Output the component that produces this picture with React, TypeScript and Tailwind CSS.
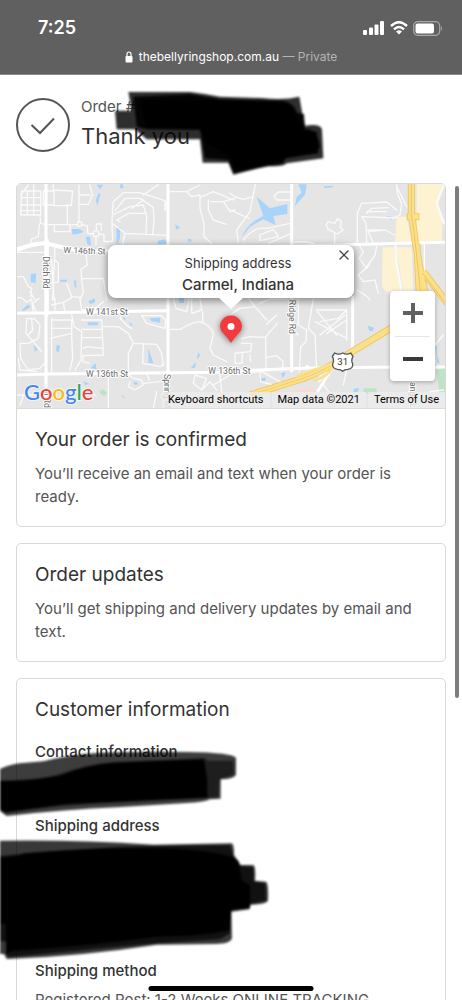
import type { ReactNode } from "react"
import { X } from "lucide-react"

const GOOGLE_LETTERS = [
  { char: "G", color: "#4285F4" },
  { char: "o", color: "#EA4335" },
  { char: "o", color: "#FBBC05" },
  { char: "g", color: "#4285F4" },
  { char: "l", color: "#34A853" },
  { char: "e", color: "#EA4335" },
]

function StatusBar() {
  return (
    <header className="h-[75px] shrink-0 bg-[#606060] border-b border-[#8a8a8a] text-white">
      <div className="flex items-center justify-between pl-[38px] pr-[19px] pt-4">
        <span className="text-lg leading-6 font-semibold">7:25</span>
        <div className="flex items-center gap-[5px]">
          <svg width="22" height="14" viewBox="0 0 22 14" fill="#fff">
            <rect x="0" y="9" width="4" height="5" rx="1" />
            <rect x="6" y="6.500" width="4" height="7.500" rx="1" />
            <rect x="11.500" y="3.500" width="4" height="10.500" rx="1" />
            <rect x="17" y="0" width="4" height="14" rx="1" />
          </svg>
          <svg width="18" height="14" viewBox="0 0 18 14" fill="none" stroke="#fff" strokeWidth="2.400">
            <path d="M1 5 Q9 -2.500 17 5" />
            <path d="M4 8.300 Q9 3.500 14 8.300" />
            <path d="M9 13.500 L6 10.500 Q9 8 12 10.500 Z" fill="#fff" stroke="none" />
          </svg>
          <svg width="30" height="15" viewBox="0 0 30 15">
            <rect x="0.700" y="0.700" width="26" height="13.600" rx="4" fill="none" stroke="#a8a8a8" strokeWidth="1.200" />
            <rect x="2.500" y="2.500" width="18.500" height="10" rx="2" fill="#fff" />
            <path d="M28 5 Q30 7.500 28 10 Z" fill="#a8a8a8" />
          </svg>
        </div>
      </div>
      <div className="flex items-center justify-center gap-[6px] mt-[7px] text-[12px] leading-5">
        <svg width="8" height="12" viewBox="0 0 8 12">
          <rect x="0.500" y="5" width="7" height="6.500" rx="1" fill="#fff" />
          <path d="M2 5.500 V3.300 Q2 1 4 1 Q6 1 6 3.300 V5.500" fill="none" stroke="#fff" strokeWidth="1.200" />
        </svg>
        <p>
          thebellyringshop.com.au <span className="text-[#b4b4b4]">— Private</span>
        </p>
      </div>
    </header>
  )
}

/** Street map, drawn at three units per pixel and split into four quadrants. */
function StreetMap() {
  return (
    <svg
      className="block w-full h-full"
      viewBox="0 0 1290 672"
      preserveAspectRatio="xMidYMid slice"
      fill="none"
      strokeLinecap="round"
      strokeLinejoin="round"
    >
      <rect width="1290" height="672" fill="#e5e5e5" />

      {/* Parks and commercial areas */}
      <g transform="translate(642 -12)">
        <path d="M560 10 H642 L625 70 L636 112 V185 H560 Z M530 110 H500 L495 185 H545 Z M458 202 H490 L515 335 H470 L456 320 Z M498 202 H545 L550 335 H520 Z" fill="#fdf3d3" />
      </g>
      <g transform="translate(642 333)">
        <path d="M618 225 L650 215 V300 H630 Z M400 280 H440 V295 H400 Z" fill="#bfe3c6" />
        <path d="M165 290 L250 275 L262 300 H150 Z" fill="#f7dcd6" />
      </g>
      <path d="M250 622 l12 -6 12 10 -8 10 -10 -4 Z" fill="#bfe3c6" />

      {/* Water */}
      <g fill="#a8d4fb">
        <g transform="translate(-48 -12)">
          <path d="M290 14 H310 L300 28 Z M296 38 L301 42 L292 78 L288 60 Z M360 14 L368 12 L372 25 L360 24 Z M215 147 H240 L250 156 L232 163 H217 Z M257 170 H270 L273 197 L262 193 Z M349 145 L361 142 L360 175 L350 195 Z M525 133 L540 142 L530 150 Z M475 182 L495 178 L503 192 H473 Z M563 178 l10 -2 2 8 -9 2 Z M92 282 L108 280 L107 310 L92 306 Z M180 299 H201 V305 H180 Z M222 302 L228 300 L229 325 L224 320 Z" />
        </g>
        <g transform="translate(642 -12)">
          <path d="M205 13 H230 L226 42 L195 78 L200 50 L215 38 Z M282 19 L308 17 V22 L283 24 Z M80 50 L120 85 L172 72 V102 L130 108 L137 135 L100 118 L60 140 L35 172 Q50 130 100 108 Z M470 108 L485 110 V121 Z" />
        </g>
        <g transform="translate(-48 333)">
          <path d="M65 45 L85 28 L92 36 L70 48 Z M265 18 L285 10 V22 L270 28 Z M263 82 H293 V91 H263 Z M367 65 L377 70 L374 76 Z M388 80 L400 92 L390 91 Z M448 70 L480 68 V83 L455 79 Z M537 9 H552 V23 H538 Z M100 150 L113 164 L105 170 Z M170 150 L180 152 L176 172 L168 168 Z M272 220 L286 204 L290 223 Z M445 160 L460 205 L445 203 Z M595 170 L600 182 L590 193 Z M572 220 L588 201 L585 218 Z M399 263 L408 260 L415 266 L406 271 Z M250 258 L268 267 L255 270 Z M364 299 L380 311 L368 306 Z" />
        </g>
        <g transform="translate(642 333)">
          <path d="M414 92 L432 98 L428 109 L417 107 Z M153 234 L168 232 L158 250 Z M88 250 L108 248 L105 258 H90 Z M372 281 L388 279 L382 292 H370 Z M614 150 L620 155 V180 L630 205 L622 203 Z" />
        </g>
      </g>

      {/* Side streets */}
      <g stroke="#fafafa" strokeWidth="4">
        <g transform="translate(-48 -12)">
          <path d="M65 33 H122 V105 H62 Z M63 53 H122 M62 75 H122 M62 92 H122 M82 33 V105 M101 15 V105 M62 45 L85 15 M120 108 L122 130 L138 134 M118 132 L115 170 L93 178 L95 190 M130 33 H162 V75 H130 Z M160 14 V30 L218 33 L214 77 L202 75 M163 77 H202 V135 M139 134 H232 M163 135 V155 H210 V132 M237 15 V125 M240 45 H270 M240 73 H267 M269 15 L278 45 L265 73 M245 133 L262 138 L263 160 L280 162 M296 162 L312 164 V185 H335 M289 150 V132 H304 V150 M288 170 V195 M314 184 H338 L336 130 L375 160 L368 192 M336 130 L337 105 L390 80 L430 75 L440 110 L438 160 M337 100 L340 65 L370 38 H420 L495 62 V92 L500 65 M420 55 H375 L345 92 M420 55 L460 82 L462 122 L458 162 M395 85 L430 60 M360 125 L350 120 L385 100 H435 M376 160 L500 166 M430 45 L475 14 M510 35 H560 L600 15 M560 35 L575 50 L600 45 M600 50 V85 L612 130 L612 170 L635 190 M625 60 V90 L640 120 L680 133 M632 65 H670 L690 95 L705 90 M600 52 L640 35 L700 60 M670 65 L705 55 M50 217 H135 M155 240 L162 360 M165 205 L158 360 M155 310 L175 306 V250 L165 240 M258 225 L262 255 L243 268 L245 300 L250 335 L240 360 M247 296 H310 L320 360 M50 290 H70 L85 320 L95 325 L92 350 M200 310 L215 350 L240 352 M90 335 L105 360" />
          <circle cx="239" cy="132" r="7" />
          <circle cx="288" cy="161" r="9" />
        </g>
        <g transform="translate(642 -12)">
          <path d="M76 14 L60 95 L20 150 L25 185 M0 40 L15 50 L40 58 L70 50 M0 90 L58 115 M184 36 H145 L132 48 L140 60 H184 M40 180 Q70 140 110 145 L182 130 M90 165 L130 148 L145 170 L90 182 Z M115 190 L184 160 M190 188 Q230 180 260 195 M288 135 L295 125 L315 130 L322 116 L335 125 L330 142 L340 150 L322 162 L295 148 Z M314 162 V190 M500 14 L502 40 L515 72 L510 105 L495 112 M382 190 V100 L395 70 L470 66 L500 90 M410 190 L408 130 L395 110 L495 114 M412 95 H470 M410 100 L425 85 L475 83 M430 190 L415 155 L465 150 L493 165 M410 150 H450 M390 200 L400 215 L388 235 L410 265 L420 250 M440 200 L435 225 L405 268 L385 285 L400 305 L435 300 L445 340 M500 20 L530 80 M380 330 Q410 345 420 360" />
          <path d="M495 190 L500 250 L515 335 M642 14 L620 70 L642 130" strokeWidth="7" />
        </g>
        <g transform="translate(-48 333)">
          <path d="M50 8 H65 L80 22 L95 12 L100 52 M118 10 L98 25 L110 55 M165 10 V45 M155 30 L190 22 L215 8 M190 22 L195 50 M240 12 L245 45 H280 L310 20 M80 70 L105 72 L120 90 L115 130 L85 145 L60 145 L62 190 L85 225 L120 220 L132 205 M80 70 L78 115 L100 140 L125 170 M55 190 L60 225 L110 230 M95 75 L98 105 L85 120 M155 75 H215 V125 L218 190 L210 225 M155 100 H212 M155 70 V235 M150 130 L215 115 M215 60 L222 95 L245 110 L243 195 L225 225 M245 75 H305 L310 180 L250 182 L248 200 L268 205 M245 103 H305 M248 128 H308 M310 95 H355 L385 115 L400 145 L385 175 V228 M365 60 L360 70 L385 95 L395 100 M308 160 L260 155 M250 160 L260 155 M430 62 H485 L497 75 L495 100 L440 85 L425 62 Z M400 145 L470 148 L485 175 L490 212 M430 150 L428 205 L480 215 L493 205 M510 103 H540 Q580 80 600 80 Q640 95 640 120 L630 160 L640 180 L680 200 M520 10 L528 40 L560 50 L568 10 M575 10 V55 L605 45 L600 10 M608 50 V80 M380 235 L400 250 L425 255 L430 270 L405 285 L385 275 L390 260 M430 265 L480 260 M440 235 L448 255 M325 240 V340 M255 290 L285 300 M585 240 L580 265 L605 285 L620 250 L585 240 M605 285 L630 260 L650 285 M660 240 L665 290 M50 300 H100 M640 270 L690 240 M60 330 L75 290 M470 290 L460 340" />
        </g>
        <g transform="translate(642 333)">
          <path d="M0 60 L30 40 L75 35 L110 75 M75 35 L55 10 M90 25 L120 12 H170 M35 130 L60 125 L107 127 L108 230 M105 127 L142 85 M35 145 H65 L62 170 L38 172 L35 205 L15 205 L15 175 L38 172 M110 187 L140 182 L160 200 L155 230 M110 87 L140 60 M60 180 L62 200 M205 10 V90 L230 105 L228 140 L212 155 L208 230 M250 10 L235 100 L255 120 L260 225 M260 45 H350 L325 70 L270 80 M255 80 L350 130 M270 120 L345 60 M290 115 L350 75 M262 50 L320 120 M350 135 V45 M190 110 L205 120 M540 270 V330 M0 235 L95 230 L150 260 L110 290 M90 235 L92 260 L130 270 M290 230 L280 270 L300 295 M350 225 L340 270 M615 150 L640 120 M600 290 L640 285" />
        </g>
      </g>

      {/* Main streets */}
      <g stroke="#fff" strokeWidth="10">
        <path d="M90 0 V672 M0 198 Q70 172 98 180 Q160 198 240 200 L1290 175 M456 0 V672 M0 388 L450 380 M0 573 L94 570 L620 565 Q800 548 1290 549 M827 0 V560 M1010 340 V510" strokeWidth="9" />
        <path d="M0 198 Q70 172 98 180 Q150 192 190 200 M92 170 V390" strokeWidth="13" />
        <path d="M1225 183 V345" strokeWidth="4" />
      </g>

      {/* Highways */}
      <g transform="translate(642 333)" strokeLinecap="butt">
        <path d="M228 212 L268 240 L300 220 M265 260 L280 245 M262 290 L310 215" stroke="#fff" strokeWidth="8" />
        <path d="M60 300 Q140 275 220 250 Q290 225 350 180 L490 95" stroke="#efc45e" strokeWidth="21" />
        <path d="M60 300 Q140 275 220 250 Q290 225 350 180 L490 95" stroke="#fbe08a" strokeWidth="16" />
        <path d="M60 300 Q140 275 220 250 Q290 225 350 180" stroke="#efc45e" strokeWidth="2" />
        <path d="M200 245 Q250 220 310 208 M250 258 Q290 250 310 215" stroke="#fbe08a" strokeWidth="7" />
      </g>
      <g transform="translate(642 -12)" strokeLinecap="butt">
        <path d="M544 10 V105 Q553 155 556 190 L575 290 L585 340 M530 110 H568 M560 190 L568 340 M580 275 L660 380" stroke="#efc45e" strokeWidth="21" />
        <path d="M544 10 V105 Q553 155 556 190 L575 290 L585 340 M533 110 H566 M560 190 L568 340 M580 275 L660 380" stroke="#fbe08a" strokeWidth="16" />
        <path d="M544 10 V105 Q553 155 556 190 L572 340 M578 280 L655 380" stroke="#efc45e" strokeWidth="3" />
      </g>

      {/* Street names */}
      <g
        fill="#6b6b6b"
        stroke="#fff"
        strokeWidth="6"
        style={{ paintOrder: "stroke" }}
        fontFamily="Roboto, sans-serif"
        fontSize="26"
      >
        <text x="142" y="207" transform="rotate(2 142 207)">W 146th St</text>
        <text x="210" y="394">W 141st St</text>
        <text x="210" y="579">W 136th St</text>
        <text x="577" y="571">W 136th St</text>
        <text transform="translate(82 217) rotate(90)">Ditch Rd</text>
        <text transform="translate(84 620) rotate(90)">h Rd</text>
        <text transform="translate(445 570) rotate(90)">Spring Mill</text>
        <text transform="translate(820 328) rotate(90)">k Ridge Rd</text>
        <text transform="translate(1183 594) rotate(90)">ange Line</text>
      </g>

      {/* US 31 shield */}
      <g transform="translate(980 534)">
        <path
          d="M-24 -27 Q-12 -20 0 -27 Q12 -20 24 -27 L31 -17 Q24 -4 30 5 Q32 20 15 22 Q5 22 0 28 Q-5 22 -15 22 Q-32 20 -30 5 Q-24 -4 -31 -17 Z"
          fill="#fff"
          stroke="#555"
          strokeWidth="4"
        />
        <text y="10" textAnchor="middle" fill="#333" fontFamily="Roboto, sans-serif" fontSize="29">31</text>
      </g>
    </svg>
  )
}

function DeliveryMap() {
  return (
    <div className="relative h-[225px] overflow-hidden rounded-t border-b border-[#dcdcdc]">
      <StreetMap />

      {/* Address bubble */}
      <div className="absolute left-1/2 top-[61px] -translate-x-1/2 w-[246px] h-[53px] rounded-lg bg-white shadow-[0_2px_7px_1px_rgba(0,0,0,0.4)] pl-[14px] pt-[7px] text-center text-[#333]">
        <p className="text-[13px] leading-[22px]">Shipping address</p>
        <p className="text-[15px] leading-[22px] font-medium">Carmel, Indiana</p>
        <button aria-label="Close" className="absolute right-[2px] top-[2px] text-[#444]">
          <X size={16} strokeWidth={2} />
        </button>
        <svg className="absolute left-1/2 top-full -translate-x-1/2" width="24" height="12" viewBox="0 0 24 12">
          <path d="M0 0 H24 L12 11 Z" fill="#fff" />
        </svg>
      </div>
      <svg
        className="absolute left-1/2 top-[130px] -translate-x-1/2 drop-shadow-[0_1px_3px_rgba(0,0,0,0.5)]"
        width="24"
        height="30"
        viewBox="0 0 24 30"
      >
        <path d="M12 29 Q9 24 4 19 Q1 16 1 12.500 A11 11 0 0 1 23 12.500 Q23 16 20 19 Q15 24 12 29 Z" fill="#f23b3f" />
        <circle cx="12" cy="12.500" r="3.500" fill="#fff" />
      </svg>

      {/* Zoom control */}
      <div className="absolute right-[10px] top-[107px] flex flex-col w-[45px] h-[90px] rounded-sm bg-white shadow-[0_1px_4px_rgba(0,0,0,0.3)]">
        <button aria-label="Zoom in" className="flex flex-1 items-center justify-center">
          <svg width="20" height="20" viewBox="0 0 20 20" stroke="#606060" strokeWidth="4">
            <path d="M0 10 H20 M10 0 V20" />
          </svg>
        </button>
        <div className="mx-[5px] h-px bg-[#e6e6e6]" />
        <button aria-label="Zoom out" className="flex flex-1 items-center justify-center">
          <svg width="20" height="4" viewBox="0 0 20 4">
            <rect width="20" height="4" fill="#3a3a3a" />
          </svg>
        </button>
      </div>

      {/* Attribution */}
      <a
        href="#google"
        aria-label="Google"
        className="absolute left-[7px] bottom-0 text-[22px] leading-[32px] font-medium font-['Lato',sans-serif] [paint-order:stroke] [-webkit-text-stroke:2px_#f4f4f4]"
      >
        {GOOGLE_LETTERS.map((letter, i) => (
          <span key={i} style={{ color: letter.color }}>
            {letter.char}
          </span>
        ))}
      </a>
      <div className="absolute right-0 bottom-0 flex gap-[2px] text-[11px] leading-4 text-black font-['Roboto',sans-serif] whitespace-nowrap">
        <button className="px-[6px] bg-[#ececec]/80">Keyboard shortcuts</button>
        <span className="px-[6px] bg-[#ececec]/80">Map data ©2021</span>
        <a href="#terms" className="px-[6px] bg-[#ececec]/80">
          Terms of Use
        </a>
      </div>
    </div>
  )
}

function Card({ title, media, children }: { title: string; media?: ReactNode; children: ReactNode }) {
  return (
    <section className="rounded-[5px] border border-[#d9d9d9] bg-white">
      {media}
      <div className="p-[18px]">
        <h2 className="text-[19px] leading-[26px] text-[#333]">{title}</h2>
        {children}
      </div>
    </section>
  )
}

export default function App() {
  return (
    <div className="relative flex flex-col h-screen overflow-hidden bg-white font-['Inter',sans-serif] text-[15px] leading-[23px] text-[#545454]">
      <StatusBar />

      <main className="px-4 pt-[23px]">
        {/* Order heading */}
        <div className="relative flex items-center gap-[11px] mb-[31px]">
          <svg className="shrink-0" width="54" height="54" viewBox="0 0 54 54" fill="none" stroke="#555">
            <circle cx="27" cy="27" r="26" strokeWidth="2" />
            <path d="M15.500 27 L24 35 L38 20.500" strokeWidth="2" />
          </svg>
          <div className="h-[54px]">
            <p className="leading-[18px]">Order #</p>
            <h1 className="text-[22px] leading-[40px] text-[#333]">Thank you</h1>
          </div>
          <svg className="absolute -left-4 -top-[18px] blur-[1px]" width="340" height="100" viewBox="0 0 1020 300">
            <path d="M385 36 H570 Q620 42 660 50 L785 54 Q850 62 898 50 L906 95 L915 137 Q965 130 966 150 L970 235 L860 250 Q850 262 800 258 L700 284 L685 248 H608 L600 178 H440 L405 148 H350 L345 92 H395 Z" fill="#000" fillOpacity="0.820" />
            <path d="M400 50 L570 42 L660 58 L850 62 Q885 70 890 98 L912 102 L915 148 Q955 145 960 205 L860 225 L850 250 L700 280 L685 240 L615 235 L600 150 L440 148 L410 140 Z" fill="#000" fillOpacity="0.900" />
            <path d="M420 60 H640 L850 68 Q885 75 890 110 L910 150 L950 155 L955 220 L860 235 L800 252 L710 268 L690 230 L620 190 L600 145 H440 Z" fill="#000" />
          </svg>
        </div>

        <div className="flex flex-col gap-4">
          <Card title="Your order is confirmed" media={<DeliveryMap />}>
            <p className="mt-[9px]">You’ll receive an email and text when your order is ready.</p>
          </Card>

          <Card title="Order updates">
            <p className="mt-[9px]">You’ll get shipping and delivery updates by email and text.</p>
          </Card>

          <Card title="Customer information">
            <div className="relative mt-[17px] pb-[51px]">
              <h3 className="font-medium text-[#333]">Contact information</h3>
              <svg className="absolute -left-[35px] -top-[10px] blur-[1px]" width="300" height="110" viewBox="0 0 900 330">
                <path d="M-20 128 Q20 104 60 100 L130 94 Q200 74 300 68 Q450 64 560 66 Q700 68 708 84 V134 Q704 146 662 148 V206 L630 208 Q610 218 560 219 L350 232 Q200 238 20 258 L-20 228 Z" fill="#000" fillOpacity="0.760" />
                <path d="M-20 152 Q120 150 180 132 Q260 102 340 96 L615 84 L622 92 L700 92 L702 134 L660 148 L655 202 L560 208 L350 218 Q150 226 15 250 L-20 225 Z" fill="#000" fillOpacity="0.500" />
                <path d="M-20 154 Q120 152 185 135 Q260 104 345 98 L612 88 L622 150 V203 L500 208 L200 222 L15 247 L-20 222 Z" fill="#000" />
              </svg>
            </div>

            <div className="relative pb-[122px]">
              <h3 className="font-medium text-[#333]">Shipping address</h3>
              <svg className="absolute -left-[35px] top-4 blur-[1px]" width="300" height="170" viewBox="0 0 900 510">
                <path d="M-20 33 Q200 28 460 44 L695 40 Q703 44 702 75 L722 105 H760 Q768 110 765 152 L798 155 Q806 160 804 212 Q800 222 752 224 L748 238 L694 245 L696 325 Q690 343 640 342 L470 344 Q250 378 20 387 L12 372 H-20 Z" fill="#000" fillOpacity="0.780" />
                <path d="M-20 80 Q250 52 460 48 L690 46 L700 78 L722 108 L760 112 L762 155 L796 160 L798 212 L750 222 L690 240 L690 310 L660 328 L470 340 Q200 365 25 382 L18 335 L-20 330 Z" fill="#000" fillOpacity="0.700" />
                <path d="M-20 84 Q60 80 72 70 Q300 50 520 56 Q690 66 715 92 L725 150 L750 165 V235 L694 240 L690 300 Q600 320 470 320 Q250 350 38 362 L18 375 V282 H-20 Z" fill="#000" />
              </svg>
            </div>

            <div>
              <h3 className="font-medium text-[#333]">Shipping method</h3>
              <p className="mt-[6px]">Registered Post: 1-2 Weeks ONLINE TRACKING</p>
            </div>
          </Card>
        </div>
      </main>

      {/* Scroll indicator and home bar */}
      <div className="absolute right-[3px] top-[186px] w-1 h-[512px] rounded-full bg-[#7d7d7d]" />
      <div className="absolute bottom-[9px] left-1/2 -translate-x-1/2 w-[165px] h-[5px] rounded-full bg-black" />
    </div>
  )
}
